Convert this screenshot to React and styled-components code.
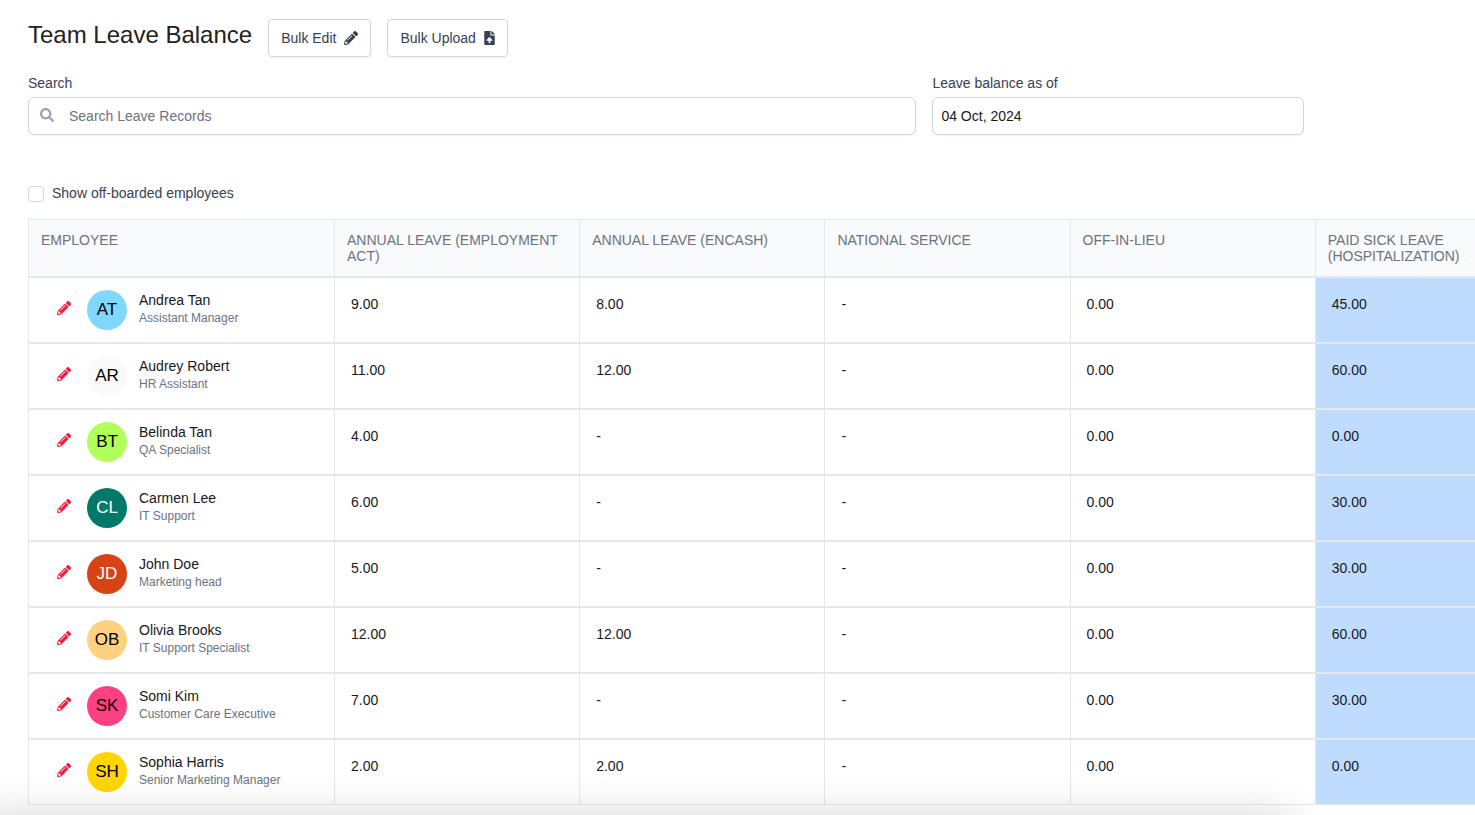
import React, { useState } from 'react'
import styled, { createGlobalStyle, css } from 'styled-components'
import { FaFileUpload, FaPencilAlt, FaSearch } from 'react-icons/fa'

const colors = {
  title: '#212121',
  ink: '#18181b',
  text: '#374151',
  muted: '#6b7280',
  icon: '#9ca3af',
  line: '#e5e7eb',
  control: '#d1d5db',
  head: '#f9fafb',
  highlight: '#bfdbfe',
  danger: '#ff1737'
}

const columns = [
  'Annual Leave (Employment Act)',
  'Annual Leave (Encash)',
  'National Service',
  'Off-in-lieu',
  'Paid Sick Leave (Hospitalization)'
]

const employees = [
  { name: 'Andrea Tan', job: 'Assistant Manager', initials: 'AT', bg: '#80d8ff', balances: ['9.00', '8.00', '-', '0.00', '45.00'] },
  { name: 'Audrey Robert', job: 'HR Assistant', initials: 'AR', bg: '#fafafa', balances: ['11.00', '12.00', '-', '0.00', '60.00'] },
  { name: 'Belinda Tan', job: 'QA Specialist', initials: 'BT', bg: '#b2ff59', balances: ['4.00', '-', '-', '0.00', '0.00'] },
  { name: 'Carmen Lee', job: 'IT Support', initials: 'CL', bg: '#00796b', fg: '#fff', balances: ['6.00', '-', '-', '0.00', '30.00'] },
  { name: 'John Doe', job: 'Marketing head', initials: 'JD', bg: '#d84315', fg: '#fff', balances: ['5.00', '-', '-', '0.00', '30.00'] },
  { name: 'Olivia Brooks', job: 'IT Support Specialist', initials: 'OB', bg: '#ffd180', balances: ['12.00', '12.00', '-', '0.00', '60.00'] },
  { name: 'Somi Kim', job: 'Customer Care Executive', initials: 'SK', bg: '#ff4081', balances: ['7.00', '-', '-', '0.00', '30.00'] },
  { name: 'Sophia Harris', job: 'Senior Marketing Manager', initials: 'SH', bg: '#ffd600', balances: ['2.00', '2.00', '-', '0.00', '0.00'] }
]

const GlobalStyle = createGlobalStyle`
  *, *::before, *::after {
    box-sizing: border-box;
  }
  body {
    margin: 0;
    background: #fff;
    color: ${colors.ink};
    font-family: 'Liberation Sans', Arial, sans-serif;
    font-size: 14px;
    line-height: 20px;
  }
  button, input {
    font: inherit;
  }
`

const Page = styled.main`
  padding: 19px 0 8px 28px;
`

const Header = styled.header`
  display: flex;
  align-items: flex-start;
  gap: 16px;
`

const Title = styled.h1`
  margin: 0;
  font-size: 24px;
  font-weight: 400;
  line-height: 32px;
  color: ${colors.title};
`

const controlCSS = css`
  height: 38px;
  border: 1px solid ${colors.control};
  background: #fff;
  box-shadow: 0 1px 2px rgba(0, 0, 0, 0.05);
`

const Button = styled.button`
  ${controlCSS}
  display: inline-flex;
  align-items: center;
  gap: 8px;
  padding: 0 12px;
  border-radius: 4px;
  color: ${colors.text};
  cursor: pointer;
  svg {
    width: ${props => props.$iconWidth || 14}px;
    height: 14px;
  }
`

const Filters = styled.form`
  display: grid;
  grid-template-columns: repeat(10, 1fr);
  gap: 16px;
  max-width: 1276px;
  margin-top: 16px;
`

const Field = styled.div`
  grid-column: span ${props => props.$span};
  display: flex;
  flex-direction: column;
  gap: 4px;
`

const Label = styled.label`
  color: ${colors.text};
`

const Input = styled.input`
  ${controlCSS}
  width: 100%;
  padding: 0 8px;
  border-radius: 6px;
  color: ${colors.ink};
`

const SearchBox = styled.div`
  position: relative;
  svg {
    position: absolute;
    top: 11px;
    left: 12px;
    color: ${colors.icon};
  }
  input {
    padding-left: 40px;
  }
  input::placeholder {
    color: ${colors.muted};
    opacity: 1;
  }
`

const Toggle = styled.label`
  display: flex;
  width: fit-content;
  gap: 8px;
  margin: 48px 0 16px;
  color: ${colors.text};
`

const Checkbox = styled.input`
  appearance: none;
  width: 16px;
  height: 16px;
  margin: 3px 0 0;
  border: 1px solid ${colors.control};
  border-radius: 4px;
  background: #fff;
  &:checked {
    border-color: #2563eb;
    background: #2563eb;
  }
`

const TableScroll = styled.div`
  overflow-x: auto;
  scrollbar-width: none;
`

const Table = styled.table`
  width: 100%;
  min-width: 1532px;
  table-layout: fixed;
  border-spacing: 0;
`

const cellCSS = css`
  padding: 12px;
  border: 1px solid ${colors.line};
  border-right-width: 0;
  text-align: left;
  vertical-align: top;
`

const HeadCell = styled.th`
  ${cellCSS}
  width: ${props => (props.$wide ? '306px' : 'auto')};
  background: ${colors.head};
  color: ${colors.muted};
  font-weight: 400;
  line-height: 16px;
  text-transform: uppercase;
`

const Cell = styled.td`
  ${cellCSS}
  background: ${props => (props.$highlight ? colors.highlight : '#fff')};
`

const Balance = styled.div`
  padding: 4px;
`

const Employee = styled.div`
  display: flex;
  height: 40px;
`

const EditButton = styled.button`
  display: flex;
  align-items: center;
  height: 36px;
  padding: 0 16px;
  border: 0;
  background: none;
  color: ${colors.danger};
  cursor: pointer;
`

const Avatar = styled.div`
  display: flex;
  flex: none;
  align-items: center;
  justify-content: center;
  width: 40px;
  height: 40px;
  margin-right: 12px;
  border-radius: 50%;
  background: ${props => props.$bg};
  color: ${props => props.$fg || '#000'};
  font-size: 17px;
`

const Job = styled.div`
  color: ${colors.muted};
  font-size: 12px;
  line-height: 16px;
`

const DockShadow = styled.div`
  position: fixed;
  top: 100%;
  left: -24px;
  width: calc(100% - 160px);
  height: 60px;
  box-shadow: 0 0 40px rgba(0, 0, 0, 0.16);
  pointer-events: none;
`

const EmployeeRow = ({ employee }) => (
  <tr>
    <Cell>
      <Employee>
        <EditButton type='button' aria-label={`Edit ${employee.name}`}>
          <FaPencilAlt size={14} />
        </EditButton>
        <Avatar $bg={employee.bg} $fg={employee.fg}>
          {employee.initials}
        </Avatar>
        <div>
          <div>{employee.name}</div>
          <Job>{employee.job}</Job>
        </div>
      </Employee>
    </Cell>
    {employee.balances.map((balance, i) => (
      <Cell key={columns[i]} $highlight={i === 4}>
        <Balance>{balance}</Balance>
      </Cell>
    ))}
  </tr>
)

const App = () => {
  const [search, setSearch] = useState('')
  const [date, setDate] = useState('04 Oct, 2024')

  const rows = employees.filter(e =>
    e.name.toLowerCase().includes(search.toLowerCase())
  )

  return (
    <Page>
      <GlobalStyle />
      <Header>
        <Title>Team Leave Balance</Title>
        <Button type='button'>
          Bulk Edit <FaPencilAlt />
        </Button>
        <Button type='button' $iconWidth={11}>
          Bulk Upload <FaFileUpload />
        </Button>
      </Header>

      <Filters onSubmit={e => e.preventDefault()}>
        <Field $span={7}>
          <Label htmlFor='search'>Search</Label>
          <SearchBox>
            <FaSearch size={14} />
            <Input
              id='search'
              type='text'
              placeholder='Search Leave Records'
              value={search}
              onChange={e => setSearch(e.target.value)}
            />
          </SearchBox>
        </Field>
        <Field $span={3}>
          <Label htmlFor='date'>Leave balance as of</Label>
          <Input
            id='date'
            type='text'
            value={date}
            onChange={e => setDate(e.target.value)}
          />
        </Field>
      </Filters>

      <Toggle>
        <Checkbox type='checkbox' />
        Show off-boarded employees
      </Toggle>

      <TableScroll>
        <Table>
          <thead>
            <tr>
              <HeadCell $wide>Employee</HeadCell>
              {columns.map(column => (
                <HeadCell key={column}>{column}</HeadCell>
              ))}
            </tr>
          </thead>
          <tbody>
            {rows.map(employee => (
              <EmployeeRow key={employee.name} employee={employee} />
            ))}
          </tbody>
        </Table>
      </TableScroll>
      <DockShadow />
    </Page>
  )
}

export default App
